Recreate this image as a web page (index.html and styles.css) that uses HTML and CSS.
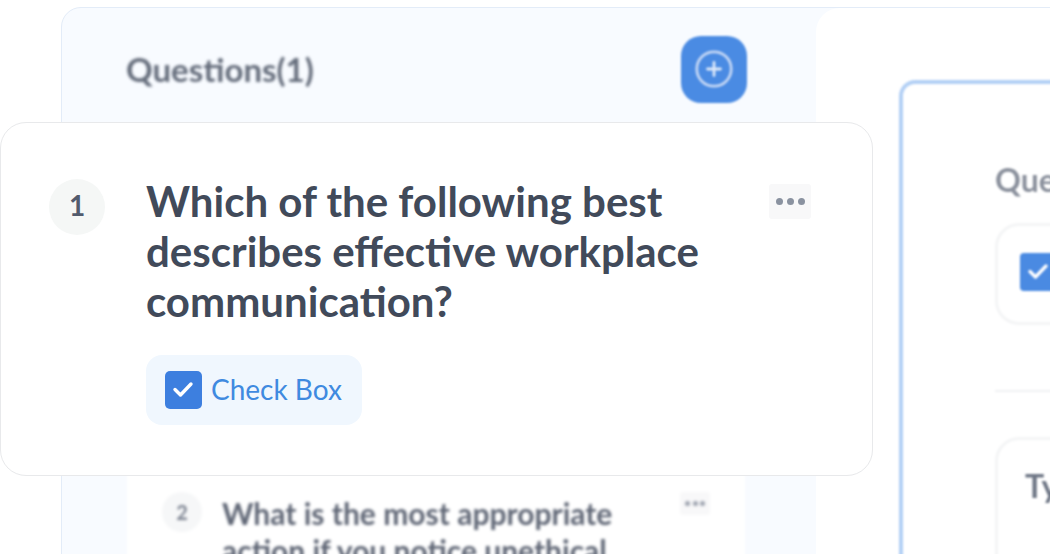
FILE: index.html
```html
<!DOCTYPE html>
<html lang="en">
<head>
<meta charset="utf-8">
<title>Questions</title>
<link rel="stylesheet" href="styles.css">
</head>
<body>
<div class="stage">
  <div class="app">
    <aside class="sidebar">
      <header class="side-head">
        <h2 class="side-title">Questions(1)</h2>
        <button class="add-btn" aria-label="Add question">
          <svg width="38" height="38" viewBox="0 0 38 38" fill="none">
            <circle cx="19" cy="19" r="17.2" stroke="#c2d6f5" stroke-width="2.8"/>
            <path d="M19 12.5v13M12.5 19h13" stroke="#dde9fa" stroke-width="2.8" stroke-linecap="round"/>
          </svg>
        </button>
      </header>
      <div class="q-card">
        <span class="q-num">2</span>
        <p class="q-text">What is the most appropriate action if you notice unethical behavior?</p>
        <span class="q-more"><i></i><i></i><i></i></span>
      </div>
    </aside>
    <main class="main">
      <section class="editor">
        <div class="field-label">Question Type</div>
        <div class="type-box"><span class="type-check"><svg width="38" height="38" viewBox="0 0 38 38" fill="none" stroke="#fff" stroke-width="3.4"><path d="M10 18.5l5.5 5.5L26 13" stroke-linecap="round" stroke-linejoin="round"/></svg></span></div>
        <hr class="divider">
        <div class="text-box">Type</div>
      </section>
    </main>
  </div>

  <article class="focus-card">
    <span class="focus-num">1</span>
    <div class="focus-body">
      <h1 class="focus-title">Which of the following best describes effective workplace communication?</h1>
      <div class="chip">
        <span class="chip-check"><svg width="37" height="38" viewBox="0 0 37 38" fill="none" stroke="#fff" stroke-width="3.4"><path d="M10 18.5l5.5 5.5L26 13" stroke-linecap="round" stroke-linejoin="round"/></svg></span>
        <span class="chip-label">Check Box</span>
      </div>
    </div>
    <span class="focus-more"><i></i><i></i><i></i></span>
  </article>
</div>
</body>
</html>
```
FILE: styles.css
```css
* { box-sizing: border-box; }
html, body { margin: 0; height: 100%; background: #fff; }
body { font-family: Lato, "Liberation Sans", sans-serif; overflow: hidden; }
.stage { position: relative; width: 1050px; height: 554px; overflow: hidden; background: #fff; }

.app {
  display: flex;
  width: 1100px;
  height: 620px;
  margin: 7px 0 0 61px;
  background: #f8fbff;
  border: 1px solid #e3ecf8;
  border-radius: 20px 0 0 0;
  overflow: hidden;
}
.sidebar { width: 754px; flex: none; padding: 28px 69px 0 64px; }
.side-head { display: flex; justify-content: space-between; align-items: center; height: 66px; }
.side-title { margin: 0; font-size: 33px; font-weight: 700; color: #646c7b; filter: blur(1.4px); }
.add-btn {
  width: 66px; height: 67px; padding: 0; border: 0; border-radius: 20px;
  background: #4a8be3; display: flex; align-items: center; justify-content: center;
  filter: blur(.8px);
}
.q-card {
  display: flex; align-items: flex-start; gap: 20px;
  margin: 200px 2px 0 1px; height: 500px;
  padding: 190px 33px 0 35px;
  background: #fff;
  filter: blur(1.4px);
}
.q-num {
  width: 40px; height: 40px; flex: none; border-radius: 50%;
  background: #f6f7f8; color: #7b8290; font-weight: 700; font-size: 20px;
  display: flex; align-items: center; justify-content: center;
}
.q-text { margin: 3px 0 0; width: 420px; flex: none; font-size: 30px; line-height: 37px; font-weight: 700; color: #5f6675; }
.q-more {
  width: 30px; height: 23px; flex: none; margin-left: 18px; background: #f8f8f9; border-radius: 3px;
  display: flex; align-items: center; justify-content: center; gap: 2.5px;
}
.q-more i { width: 5px; height: 5px; border-radius: 50%; background: #9aa0ac; }

.main { flex: 1; background: #fff; border-radius: 24px 0 0 0; padding: 72px 0 0 83px; }
.editor {
  height: 560px; padding: 78px 0 0 92px;
  border: 4px solid #b3d0f5; border-radius: 16px 0 0 0;
  background: #fff;
  filter: blur(.9px);
}
.field-label { font-size: 32px; line-height: 36px; font-weight: 700; color: #8b919d; white-space: nowrap; }
.type-box {
  margin-top: 25px; height: 102px; width: 300px;
  border: 3px solid #f4f5f6; border-radius: 24px; padding: 27px 0 0 22px;
}
.type-check { display: block; width: 38px; height: 38px; border-radius: 4px; background: #4a8ae2; }
.divider { margin: 65px 0 0; height: 2px; width: 300px; border: 0; background: #f0f1f3; }
.text-box {
  margin-top: 45px; height: 200px; width: 300px; padding: 26px 0 0 27px;
  border: 3px solid #f4f5f6; border-radius: 24px;
  font-size: 32px; color: #6f7786; font-weight: 700;
}

.focus-card {
  position: absolute; left: 0; top: 122px; width: 873px; height: 354px;
  display: flex; align-items: flex-start;
  padding: 56px 60px 0 48px;
  background: #fff;
  border: 1px solid #e8e9eb;
  border-radius: 26px;
}
.focus-num {
  width: 56px; height: 56px; flex: none; border-radius: 50%;
  background: #f5f7f6; color: #525b6d; font-size: 28px; font-weight: 700;
  padding-bottom: 5px;
  display: flex; align-items: center; justify-content: center;
}
.focus-body { width: 620px; margin-left: 41px; flex: none; }
.focus-title {
  margin: -3px 0 0; font-size: 42px; line-height: 50px; font-weight: 700; color: #414a5a;
}
.chip {
  display: inline-flex; align-items: center; gap: 9px;
  height: 70px; margin-top: 29px; padding: 0 20px 0 19px;
  background: #f0f7fe; border-radius: 16px;
}
.chip-check { width: 37px; height: 38px; display: block; border-radius: 5px; background: #3d7fdf; }
.chip-check svg, .type-check svg { display: block; }
.chip-label { font-size: 28px; padding-bottom: 2px; color: #3f8ae0; }
.focus-more {
  width: 42px; height: 35px; flex: none; margin: 5px 0 0 3px; background: #f8f8f9; border-radius: 3px;
  display: flex; align-items: center; justify-content: center; gap: 4px;
}
.focus-more i { width: 7px; height: 7px; border-radius: 50%; background: #8a92a0; }
```
